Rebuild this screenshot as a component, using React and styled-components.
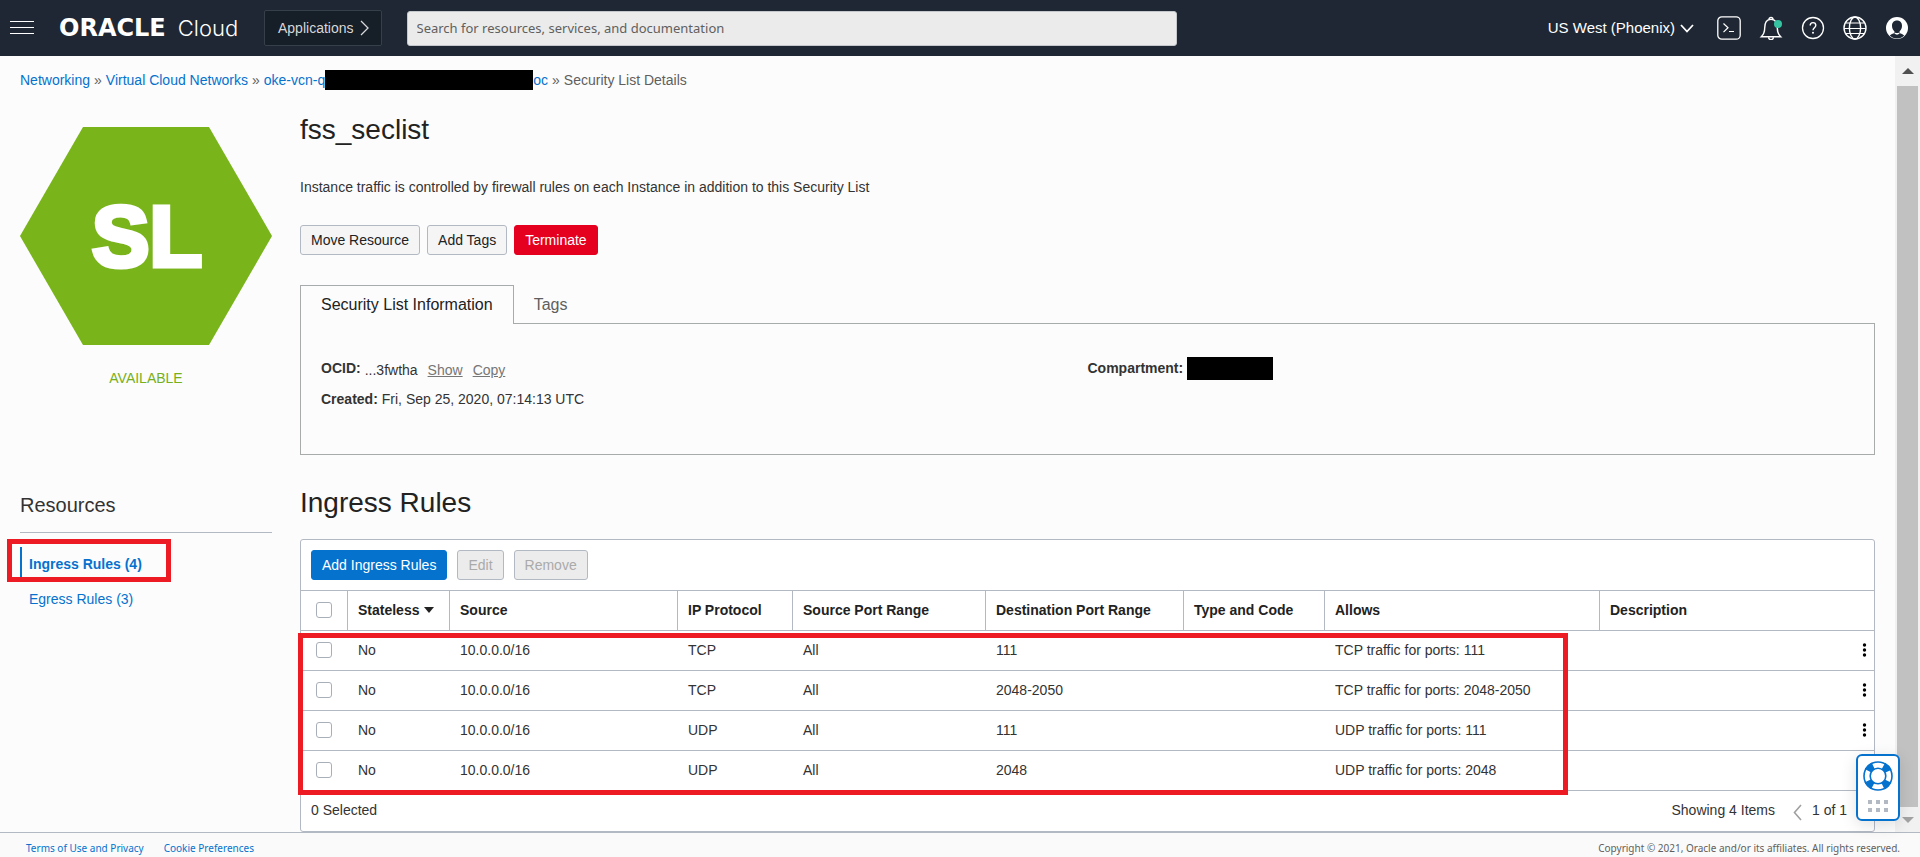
import React from "react";
import styled, { createGlobalStyle } from "styled-components";

const GlobalStyle = createGlobalStyle`
  *, *::before, *::after { box-sizing: border-box; }
  body {
    margin: 0;
    background: #fcfcfc;
    color: #333;
    font-family: "Liberation Sans", Arial, sans-serif;
    font-size: 14px;
    line-height: 20px;
  }
  h1, h2, p, dl, dd, ul { margin: 0; padding: 0; }
  button, input { font: inherit; margin: 0; }
  button { cursor: pointer; }
`;

const lineColor = "#b3b9c3";
const linkBlue = "#0572ce";
const markRed = "#ed1c24";

/* ---------- Page frame ---------- */

const Page = styled.div`
  display: flex;
  flex-direction: column;
  min-height: 100vh;
`;

const Viewport = styled.div`
  display: flex;
  flex: 1;
`;

const Content = styled.main`
  flex: 1;
  min-width: 0;
  padding: 14px 20px 0;
`;

const Columns = styled.div`
  display: grid;
  grid-template-columns: 252px minmax(0, 1fr);
  column-gap: 28px;
  margin-top: 21px;
`;

/* ---------- Header ---------- */

const Header = styled.header`
  display: flex;
  align-items: center;
  height: 56px;
  padding: 0 11px 0 10px;
  background: #1e2733;
  color: #fff;
`;

const IconButton = styled.button`
  display: flex;
  padding: 0;
  border: 0;
  background: none;
  color: inherit;
`;

const Brand = styled.a`
  display: flex;
  align-items: center;
  gap: 12px;
  width: 204px;
  margin-left: 25px;
  color: #fff;
  text-decoration: none;
  line-height: 32px;
`;

const BrandName = styled.span`
  font-family: "DejaVu Sans", sans-serif;
  font-weight: 700;
  font-size: 24px;
`;

const BrandProduct = styled.span`
  font-family: Inter, "Open Sans", sans-serif;
  font-weight: 300;
  font-size: 22px;
`;

const AppsButton = styled.button`
  display: flex;
  align-items: center;
  gap: 6px;
  height: 36px;
  margin-left: 1px;
  padding: 0 12px 0 13px;
  border: 1px solid #36404b;
  border-radius: 2px;
  background: #161e27;
  color: #d6d8da;
`;

const SearchBox = styled.input`
  flex: 0 1 770px;
  min-width: 200px;
  height: 35px;
  margin-left: 25px;
  padding: 0 9px;
  border: 1px solid #c4c8cc;
  border-radius: 3px;
  background: #ebebeb;
  font-family: "Noto Sans", "Open Sans", sans-serif;
  font-size: 13px;
  &::placeholder { color: #5f5f5f; opacity: 1; }
`;

const Region = styled.button`
  display: flex;
  align-items: center;
  gap: 5px;
  margin-left: auto;
  padding: 0;
  border: 0;
  background: none;
  color: #fff;
  font-size: 15px;
  white-space: nowrap;
`;

const HeaderIcons = styled.div`
  display: flex;
  align-items: center;
  gap: 18px;
  margin-left: 23px;
`;

/* ---------- Breadcrumb ---------- */

const Breadcrumb = styled.nav`
  display: flex;
  gap: 4px;
  color: #5f5f5f;
  white-space: nowrap;
`;

const Link = styled.a`
  color: ${linkBlue};
  text-decoration: none;
`;

const Redaction = styled.span`
  display: inline-block;
  vertical-align: top;
  width: ${(p) => p.$width}px;
  height: ${(p) => p.$height}px;
  background: #000;
`;

/* ---------- Side column ---------- */

const Side = styled.aside`
  display: flex;
  flex-direction: column;
  padding-top: 16px;
`;

const Status = styled.p`
  margin-top: 23px;
  color: #76b01a;
  text-align: center;
`;

const SideTitle = styled.h2`
  margin-top: 105px;
  padding-bottom: 15px;
  border-bottom: 1px solid ${lineColor};
  font-size: 20px;
  font-weight: 400;
  line-height: 24px;
`;

const SideList = styled.ul`
  position: relative;
  margin-top: 14px;
  list-style: none;
`;

const SideLink = styled.a`
  display: block;
  padding-left: 7px;
  border-left: 2px solid ${(p) => (p.$active ? linkBlue : "transparent")};
  color: ${linkBlue};
  font-weight: ${(p) => (p.$active ? 700 : 400)};
  line-height: 35px;
  text-decoration: none;
`;

const SideMark = styled.span`
  position: absolute;
  top: -8px;
  left: -13px;
  width: 164px;
  height: 43px;
  border: 5px solid ${markRed};
  pointer-events: none;
`;

/* ---------- Detail column ---------- */

const Title = styled.h1`
  color: #222;
  font-size: 28px;
  font-weight: 400;
  line-height: 38px;
`;

const SectionTitle = styled(Title).attrs({ as: "h2" })`
  margin-top: 29px;
`;

const Description = styled.p`
  margin-top: 28px;
`;

const Actions = styled.div`
  display: flex;
  gap: 7px;
  margin-top: 28px;
`;

const variants = {
  plain: ["#f5f5f5", lineColor, "#222"],
  danger: ["#e6001f", "#e6001f", "#fff"],
  primary: [linkBlue, linkBlue, "#fff"],
};

const Button = styled.button`
  height: 30px;
  padding: 0 10px;
  border: 1px solid ${(p) => variants[p.$variant || "plain"][1]};
  border-radius: 3px;
  background: ${(p) => variants[p.$variant || "plain"][0]};
  color: ${(p) => variants[p.$variant || "plain"][2]};
  white-space: nowrap;
  &:disabled {
    background: #ececec;
    color: #aaa;
    cursor: default;
  }
`;

const Tabs = styled.div`
  display: flex;
  margin-top: 30px;
`;

const Tab = styled.button`
  height: 39px;
  padding: 0 20px 0 19px;
  border: 1px solid transparent;
  background: none;
  color: #5f5f5f;
  font-size: 16px;
  &[aria-selected="true"] {
    padding: 0 20px;
    border-color: #a8abab;
    border-bottom: 0;
    background: #fcfcfc;
    color: #222;
    z-index: 1;
  }
`;

const InfoPanel = styled.section`
  display: grid;
  grid-template-columns: 1fr 1fr;
  min-height: 132px;
  margin-top: -1px;
  padding: 34px 20px 24px;
  border: 1px solid #a8abab;
`;

const Facts = styled.dl`
  display: flex;
  flex-direction: column;
  gap: 11px;
`;

const Fact = styled.div`
  display: flex;
  align-items: center;
  gap: 4px;
  height: 20px;
  dt { font-weight: 700; }
`;

const OcidValue = styled.dd`
  display: flex;
  gap: 10px;
  padding-top: 4px;
`;

const TextButton = styled.button`
  padding: 0;
  border: 0;
  background: none;
  color: #767676;
  text-decoration: underline;
`;

/* ---------- Rules table ---------- */

const TablePanel = styled.section`
  position: relative;
  margin-top: 17px;
  border: 1px solid ${lineColor};
  border-radius: 3px;
  background: #fff;
`;

const Toolbar = styled.div`
  display: flex;
  gap: 10px;
  padding: 10px;
`;

const Table = styled.table`
  width: 100%;
  table-layout: fixed;
  border-collapse: separate;
  border-spacing: 0;
`;

const HeadCell = styled.th`
  height: 40px;
  padding: 0 10px 2px;
  border-top: 1px solid ${lineColor};
  border-left: 1px solid ${lineColor};
  color: #222;
  text-align: left;
  white-space: nowrap;
  &:first-child { border-left: 0; padding: 0 15px 2px; }
`;

const Cell = styled.td`
  height: 40px;
  padding: 0 10px 2px 11px;
  border-top: 1px solid ${lineColor};
  white-space: nowrap;
  &:first-child { padding: 0 15px 2px; }
`;

const LastCell = styled(Cell)`
  padding-right: 6px;
  ${IconButton} { margin-left: auto; color: #000; }
`;

const SortArrow = styled.svg`
  margin-left: 5px;
  vertical-align: 2px;
`;

const Checkbox = styled.input.attrs({ type: "checkbox" })`
  appearance: none;
  display: block;
  width: 16px;
  height: 16px;
  border: 1px solid #a9afb9;
  border-radius: 3px;
  background: #fff;
`;

const TableFooter = styled.div`
  display: flex;
  align-items: center;
  height: 41px;
  padding: 0 27px 2px 10px;
  border-top: 1px solid ${lineColor};
`;

const Pager = styled.div`
  display: flex;
  align-items: center;
  gap: 10px;
  margin-left: auto;
  ${IconButton} { padding-top: 4px; color: #a0a0a0; }
`;

const PagerCount = styled.span`
  margin-right: 8px;
`;

const TableMark = styled.span`
  position: absolute;
  top: 93px;
  left: -3px;
  right: 306px;
  height: 162px;
  border: 5px solid ${markRed};
  pointer-events: none;
`;

/* ---------- Scroll track, help widget, footer ---------- */

const ScrollTrack = styled.div`
  display: flex;
  flex-direction: column;
  align-items: center;
  width: 25px;
  background: #f1f1f1;
`;

const ScrollArrow = styled.div`
  display: flex;
  align-items: center;
  height: ${(p) => p.$height}px;
`;

const ScrollThumb = styled.div`
  flex: 1;
  width: 21px;
  background: #c1c1c1;
`;

const HelpWidget = styled.button`
  position: fixed;
  right: 20px;
  bottom: 36px;
  display: flex;
  justify-content: center;
  width: 44px;
  height: 67px;
  padding: 4px 0 0;
  border: 2px solid ${linkBlue};
  border-radius: 6px;
  background: #fff;
  box-shadow: 0 4px 16px rgba(0, 0, 0, 0.12);
`;

const Footer = styled.footer`
  display: flex;
  gap: 20px;
  padding: 7px 20px 1px 26px;
  border-top: 1px solid ${lineColor};
  background: #fafafa;
  color: #5f5f5f;
  font-family: "Noto Sans", "Open Sans", sans-serif;
  font-size: 10px;
  line-height: 16px;
  white-space: nowrap;
`;

const Copyright = styled.span`
  margin-left: auto;
`;

/* ---------- Icons ---------- */

const stroke = { fill: "none", stroke: "currentColor", strokeWidth: 1.4 };

const MenuIcon = () => (
  <svg width="24" height="14" viewBox="0 0 24 14" aria-hidden="true">
    <path d="M0 .5h24M0 6.5h24M0 12.5h24" {...stroke} strokeWidth="1" />
  </svg>
);

const TerminalIcon = () => (
  <svg width="24" height="24" viewBox="0 0 24 24" aria-hidden="true">
    <rect x=".8" y=".8" width="22.4" height="22.4" rx="4" {...stroke} strokeWidth="1.3" />
    <path d="M6.500 7.500l4.500 4.300-4.500 4.300M12 15.500h5" {...stroke} strokeWidth="1.2" />
  </svg>
);

const BellIcon = () => (
  <svg width="24" height="24" viewBox="0 0 24 24" aria-hidden="true">
    <path d="M2.300 20.700c2.400-2.300 3.400-4.600 3.400-8.700 0-5.200 2-8.600 6.300-8.600s6.300 3.400 6.300 8.600c0 4.100 1 6.400 3.400 8.700z" {...stroke} />
    <path d="M10 3.500a2 2 0 0 1 4 0M9.600 21.200a2.400 2.400 0 0 0 4.800 0" {...stroke} />
    <circle cx="19" cy="8" r="4" fill="#36c3a2" />
  </svg>
);

const HelpIcon = () => (
  <svg width="24" height="24" viewBox="0 0 24 24" aria-hidden="true">
    <circle cx="12" cy="12" r="10.5" {...stroke} strokeWidth="1.3" />
    <path d="M9.200 9.600c0-1.900 1.200-3 2.800-3s2.800 1.100 2.800 2.700c0 2.300-2.800 2.500-2.800 5" {...stroke} strokeWidth="1.400" />
    <circle cx="12" cy="16.800" r="1" fill="currentColor" />
  </svg>
);

const GlobeIcon = () => (
  <svg width="24" height="24" viewBox="0 0 24 24" aria-hidden="true">
    <circle cx="12" cy="12" r="11" {...stroke} />
    <ellipse cx="12" cy="12" rx="5.600" ry="11" {...stroke} />
    <path d="M2.600 7h18.800M1 12.500h22M2.600 17.500h18.800" {...stroke} strokeWidth="1.2" />
  </svg>
);

const UserIcon = () => (
  <svg width="24" height="24" viewBox="0 0 24 24" aria-hidden="true">
    <circle cx="12" cy="12" r="11" fill="#fff" />
    <path
      d="M12 4.600c-3.200 0-5 2.200-5 5.200 0 2.600 1 4.300 2.400 5.400v1.500c0 .8-3 1-4.600 2.800 1.800 1.900 4.300 2.900 7.200 2.900s5.400-1 7.200-2.900c-1.600-1.800-4.600-2-4.600-2.800v-1.500c1.400-1.100 2.400-2.800 2.400-5.400 0-3-1.800-5.200-5-5.200z"
      fill="#1e2733"
    />
    <path d="M9.800 16.400c1.400.8 3 .8 4.400 0l.3 1.300-2.500 1-2.500-1z" fill="#fff" />
  </svg>
);

const Chevron = ({ d, width, height, weight = 1.6 }) => (
  <svg width={width} height={height} viewBox={`0 0 ${width} ${height}`} aria-hidden="true">
    <path d={d} {...stroke} strokeWidth={weight} />
  </svg>
);

const KebabIcon = () => (
  <svg width="7" height="16" viewBox="0 0 7 16" aria-hidden="true">
    <circle cx="3.500" cy="3" r="1.700" />
    <circle cx="3.500" cy="8" r="1.700" />
    <circle cx="3.500" cy="13" r="1.700" />
  </svg>
);

const HexagonBadge = () => (
  <svg width="252" height="218" viewBox="0 0 252 218" role="img" aria-label="Security List">
    <path d="M63 0h126l63 109-63 109H63L0 109z" fill="#78b41a" />
    <text
      x="127"
      y="139"
      fill="#fff"
      stroke="#fff"
      strokeWidth="5"
      textAnchor="middle"
      fontFamily="'Liberation Sans', Arial, sans-serif"
      fontWeight="700"
      fontSize="86"
    >
      SL
    </text>
  </svg>
);

const LifebuoyIcon = () => (
  <svg width="32" height="54" viewBox="0 0 32 54" aria-hidden="true">
    <circle cx="16" cy="16" r="11" fill="none" stroke={linkBlue} strokeWidth="8" strokeDasharray="7 10.280" strokeDashoffset="-5.140" />
    <circle cx="16" cy="16" r="14" fill="none" stroke={linkBlue} strokeWidth="1.600" />
    <circle cx="16" cy="16" r="7.800" fill="#fff" stroke={linkBlue} strokeWidth="1.600" />
    <path d="M6 40h4v4H6zM14 40h4v4h-4zM22 40h4v4h-4zM6 48h4v4H6zM14 48h4v4h-4zM22 48h4v4h-4z" fill="#b3b9c3" />
  </svg>
);

/* ---------- Data ---------- */

const columns = [
  { label: "Stateless", width: 102, sorted: true },
  { label: "Source", width: 228 },
  { label: "IP Protocol", width: 115 },
  { label: "Source Port Range", width: 193 },
  { label: "Destination Port Range", width: 198 },
  { label: "Type and Code", width: 141 },
  { label: "Allows", width: 275 },
  { label: "Description", width: 275 },
];

const rules = [
  { protocol: "TCP", ports: "111", menu: true },
  { protocol: "TCP", ports: "2048-2050", menu: true },
  { protocol: "UDP", ports: "111", menu: true },
  { protocol: "UDP", ports: "2048", menu: false },
];

export default function App() {
  return (
    <Page>
      <GlobalStyle />
      <Header>
        <IconButton aria-label="Open navigation menu">
          <MenuIcon />
        </IconButton>
        <Brand href="#home">
          <BrandName>ORACLE</BrandName>
          <BrandProduct>Cloud</BrandProduct>
        </Brand>
        <AppsButton>
          Applications
          <Chevron d="M1 1l7 7-7 7" width={9} height={16} weight={1.3} />
        </AppsButton>
        <SearchBox
          type="search"
          aria-label="Search"
          placeholder="Search for resources, services, and documentation"
        />
        <Region>
          US West (Phoenix)
          <Chevron d="M1 1l6 6.500 6-6.500" width={14} height={9} weight={1.8} />
        </Region>
        <HeaderIcons>
          <IconButton aria-label="Cloud Shell"><TerminalIcon /></IconButton>
          <IconButton aria-label="Announcements"><BellIcon /></IconButton>
          <IconButton aria-label="Help"><HelpIcon /></IconButton>
          <IconButton aria-label="Language"><GlobeIcon /></IconButton>
          <IconButton aria-label="Profile"><UserIcon /></IconButton>
        </HeaderIcons>
      </Header>

      <Viewport>
        <Content>
          <Breadcrumb aria-label="Breadcrumb">
            <Link href="#networking">Networking</Link>
            <span>»</span>
            <Link href="#vcns">Virtual Cloud Networks</Link>
            <span>»</span>
            <Link href="#vcn">
              oke-vcn-q
              <Redaction $width={208} $height={20} />
              oc
            </Link>
            <span>»</span>
            <span>Security List Details</span>
          </Breadcrumb>

          <Columns>
            <Side>
              <HexagonBadge />
              <Status>AVAILABLE</Status>
              <SideTitle>Resources</SideTitle>
              <SideList>
                <li><SideLink href="#ingress" $active>Ingress Rules (4)</SideLink></li>
                <li><SideLink href="#egress">Egress Rules (3)</SideLink></li>
                <SideMark as="li" aria-hidden="true" />
              </SideList>
            </Side>

            <div>
              <Title>fss_seclist</Title>
              <Description>
                Instance traffic is controlled by firewall rules on each Instance in addition to this Security List
              </Description>
              <Actions>
                <Button>Move Resource</Button>
                <Button>Add Tags</Button>
                <Button $variant="danger">Terminate</Button>
              </Actions>

              <Tabs role="tablist">
                <Tab role="tab" aria-selected="true">Security List Information</Tab>
                <Tab role="tab" aria-selected="false">Tags</Tab>
              </Tabs>
              <InfoPanel role="tabpanel">
                <Facts>
                  <Fact>
                    <dt>OCID:</dt>
                    <OcidValue>
                      <span>...3fwtha</span>
                      <TextButton>Show</TextButton>
                      <TextButton>Copy</TextButton>
                    </OcidValue>
                  </Fact>
                  <Fact>
                    <dt>Created:</dt>
                    <dd>Fri, Sep 25, 2020, 07:14:13 UTC</dd>
                  </Fact>
                </Facts>
                <Facts>
                  <Fact>
                    <dt>Compartment:</dt>
                    <dd><Redaction $width={86} $height={23} /></dd>
                  </Fact>
                </Facts>
              </InfoPanel>

              <SectionTitle>Ingress Rules</SectionTitle>
              <TablePanel>
                <Toolbar>
                  <Button $variant="primary">Add Ingress Rules</Button>
                  <Button disabled>Edit</Button>
                  <Button disabled>Remove</Button>
                </Toolbar>
                <Table>
                  <colgroup>
                    <col width="46" />
                    {columns.map((c) => <col key={c.label} width={c.width} />)}
                  </colgroup>
                  <thead>
                    <tr>
                      <HeadCell><Checkbox aria-label="Select all rules" /></HeadCell>
                      {columns.map((c) => (
                        <HeadCell key={c.label} scope="col">
                          {c.label}
                          {c.sorted && (
                            <SortArrow width="10" height="6" viewBox="0 0 10 6" aria-hidden="true">
                              <path d="M0 0h10L5 6z" fill="#222" />
                            </SortArrow>
                          )}
                        </HeadCell>
                      ))}
                    </tr>
                  </thead>
                  <tbody>
                    {rules.map((r) => (
                      <tr key={r.protocol + r.ports}>
                        <Cell><Checkbox aria-label={`Select ${r.protocol} ${r.ports}`} /></Cell>
                        <Cell>No</Cell>
                        <Cell>10.0.0.0/16</Cell>
                        <Cell>{r.protocol}</Cell>
                        <Cell>All</Cell>
                        <Cell>{r.ports}</Cell>
                        <Cell />
                        <Cell>{r.protocol} traffic for ports: {r.ports}</Cell>
                        <LastCell>
                          {r.menu && (
                            <IconButton aria-label="Rule actions"><KebabIcon /></IconButton>
                          )}
                        </LastCell>
                      </tr>
                    ))}
                  </tbody>
                </Table>
                <TableFooter>
                  <span>0 Selected</span>
                  <Pager>
                    <PagerCount>Showing 4 Items</PagerCount>
                    <IconButton aria-label="Previous page">
                      <Chevron d="M8 1L1.500 8.500 8 16" width={9} height={17} />
                    </IconButton>
                    <span>1 of 1</span>
                  </Pager>
                </TableFooter>
                <TableMark aria-hidden="true" />
              </TablePanel>
            </div>
          </Columns>
        </Content>

        <ScrollTrack aria-hidden="true">
          <ScrollArrow $height={30}>
            <svg width="12" height="6" viewBox="0 0 12 6"><path d="M0 6l6-6 6 6z" fill="#505050" /></svg>
          </ScrollArrow>
          <ScrollThumb />
          <ScrollArrow $height={25}>
            <svg width="12" height="6" viewBox="0 0 12 6"><path d="M0 0l6 6 6-6z" fill="#a3a3a3" /></svg>
          </ScrollArrow>
        </ScrollTrack>
      </Viewport>

      <Footer>
        <Link href="#terms">Terms of Use and Privacy</Link>
        <Link href="#cookies">Cookie Preferences</Link>
        <Copyright>Copyright © 2021, Oracle and/or its affiliates. All rights reserved.</Copyright>
      </Footer>

      <HelpWidget aria-label="Get help">
        <LifebuoyIcon />
      </HelpWidget>
    </Page>
  );
}
